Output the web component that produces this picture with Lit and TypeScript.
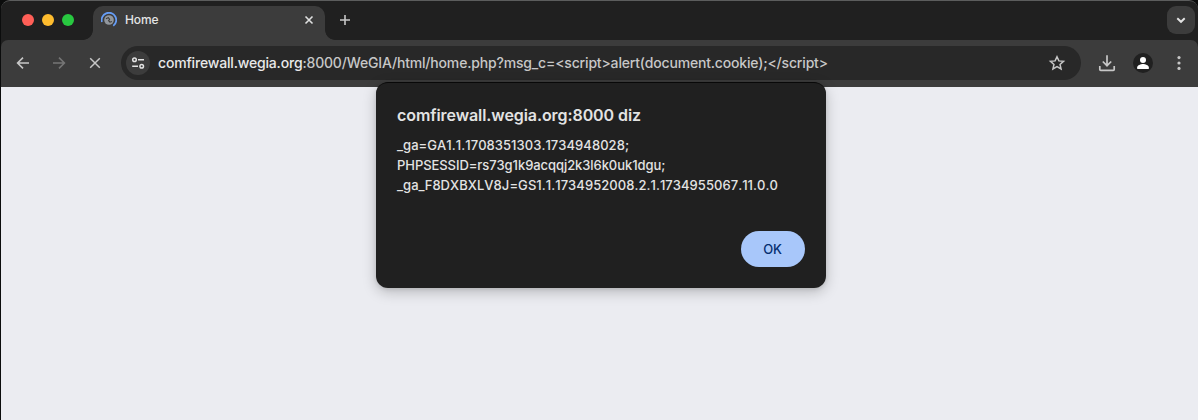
import { LitElement, html, css, svg } from "lit";
import { customElement } from "lit/decorators.js";

const icon = (size: number, body: unknown) => html`
  <svg width=${size} height=${size} viewBox="0 0 ${size} ${size}" fill="none">${body}</svg>`;

@customElement("tab-strip")
class TabStrip extends LitElement {
  static styles = css`
    :host { display: flex; height: 40px; box-sizing: border-box; padding: 5px 3px 0 21px; background: #202020; border-top: 1px solid #5c5d5d; border-top-left-radius: 9px; border-top-right-radius: 9px; }
    svg { display: block; flex: none; }
    .lights { display: flex; gap: 8px; padding-top: 8px; width: 71px; box-sizing: border-box; }
    .light { width: 12px; height: 12px; border-radius: 50%; }
    .red { background: #ff5f57; }
    .yellow { background: #febc2e; }
    .green { background: #28c840; }
    .tab { position: relative; display: flex; align-items: center; width: 232px; height: 34px; box-sizing: border-box; padding: 0 8px; background: #3c3c3c; border-radius: 10px 10px 0 0; }
    .tab::before, .tab::after { content: ""; position: absolute; bottom: 0; width: 10px; height: 10px; }
    .tab::before { left: -10px; background: radial-gradient(circle at 0 0, transparent 9.5px, #3c3c3c 10.2px); }
    .tab::after { right: -10px; background: radial-gradient(circle at 100% 0, transparent 9.5px, #3c3c3c 10.2px); }
    .title { flex: 1; margin-left: 8px; margin-top: -6px; font-size: 12px; line-height: 16px; font-weight: 500; color: #e4e5e5; letter-spacing: -.1px; }
    .shift { margin-top: -6px; }
    .plus { margin: 6px 0 0 12px; }
    .search { margin-left: auto; width: 28px; height: 28px; border-radius: 9px; background: #3c3c3c; display: grid; place-items: center; }
  `;
  render() {
    return html`
      <div class="lights"><i class="light red"></i><i class="light yellow"></i><i class="light green"></i></div>
      <div class="tab">
        <span class="shift">${icon(16, svg`
          <circle cx="8" cy="8" r="4.800" fill="#92979d"/>
          <path d="M5 6.800L7.300 5.600l1.300 1.600-1 1.500 1.300 1.500 2-.800" stroke="#3c3c3c" stroke-width="1.100"/>
          <path d="M.9 10A7.300 7.300 0 1 1 12.300 13.900" stroke="#669df6" stroke-width="1.800"/>`)}</span>
        <span class="title">Home</span>
        <span class="shift">${icon(16, svg`<path d="M4.500 4.500l7 7M11.500 4.500l-7 7" stroke="#dfe0e0" stroke-width="1.600"/>`)}</span>
      </div>
      <span class="plus">${icon(16, svg`<path d="M8 3v10M3 8h10" stroke="#c7c7c7" stroke-width="1.600"/>`)}</span>
      <div class="search">${icon(16, svg`<path d="M4.300 6.200L8 9.800l3.700-3.600" stroke="#e3e3e3" stroke-width="1.900"/>`)}</div>`;
  }
}

@customElement("nav-bar")
class NavBar extends LitElement {
  static styles = css`
    :host { display: flex; align-items: center; height: 47px; box-sizing: border-box; padding: 0 9px 1px 12px; background: #3c3c3c; border-radius: 7px 7px 0 0; }
    svg { display: block; flex: none; }
    .nav { display: flex; flex: none; gap: 16px; width: 108px; }
    .omni { display: flex; flex: none; align-items: center; width: 960px; height: 34px; box-sizing: border-box; padding: 0 14px 0 5px; border-radius: 17px; background: #282828; }
    .site { width: 24px; height: 24px; border-radius: 50%; background: #3c3c3c; display: grid; place-items: center; }
    .url { flex: 1; margin-left: 8px; font-size: 14px; line-height: 20px; letter-spacing: -.175px; white-space: nowrap; color: #c7c7c7; font-weight: 500; }
    .host { color: #e8e8e8; }
    .actions { display: flex; align-items: center; gap: 16px; margin-left: 16px; }
  `;
  render() {
    return html`
      <div class="nav">
        ${icon(20, svg`<path d="M16 10H5M10 4.600L4.600 10l5.400 5.400" stroke="#c7c7c7" stroke-width="1.600"/>`)}
        ${icon(20, svg`<path d="M4 10h11M10 4.600L15.400 10l-5.400 5.400" stroke="#757575" stroke-width="1.600"/>`)}
        ${icon(20, svg`<path d="M5.200 5.200l9.600 9.600M14.800 5.200l-9.600 9.600" stroke="#c7c7c7" stroke-width="1.500"/>`)}
      </div>
      <div class="omni">
        <span class="site">${icon(16, svg`
          <g stroke="#e3e3e3" stroke-width="1.500"><circle cx="4.500" cy="4.700" r="1.800"/><path d="M8 4.700h6M2.200 11.300h5.800"/><circle cx="11.700" cy="11.300" r="1.800"/></g>`)}</span>
        <span class="url"><span class="host">comfirewall.wegia.org</span>:8000/WeGIA/html/home.php?msg_c=&lt;script&gt;alert(document.cookie);&lt;/script&gt;</span>
        ${icon(20, svg`<path d="M10 3.700l1.900 4.200 4.600.450-3.450 3.050 1 4.500L10 13.550 5.950 15.900l1-4.500L3.500 8.350l4.600-.450z" stroke="#c7c7c7" stroke-width="1.500"/>`)}
      </div>
      <div class="actions">
        ${icon(20, svg`<path d="M10 2.300v10.200M5.800 8.500L10 12.700l4.200-4.200M2.800 13v3.400q0 .900.900.900h12.600q.900 0 .900-.900V13" stroke="#c7c7c7" stroke-width="1.700"/>`)}
        ${icon(20, svg`<circle cx="10" cy="10" r="10" fill="#202020"/><circle cx="10" cy="7" r="3" fill="#fff"/><path d="M4.200 16v-1.800c0-1.900 3.700-3.200 5.800-3.200s5.800 1.300 5.800 3.200V16z" fill="#fff"/>`)}
        ${icon(20, svg`<g fill="#c7c7c7"><circle cx="10" cy="4.600" r="1.600"/><circle cx="10" cy="10" r="1.600"/><circle cx="10" cy="15.400" r="1.600"/></g>`)}
      </div>`;
  }
}

@customElement("alert-dialog")
class AlertDialog extends LitElement {
  static styles = css`
    :host { display: flex; flex-direction: column; box-sizing: border-box; width: 450px; height: 206px; padding: 22px 21px 21px; background: #202020; border-radius: 12px; border-top: 1px solid #080808; box-shadow: 0 4px 14px rgba(0,0,0,.22), 0 1px 4px rgba(0,0,0,.1); }
    .heading { font-size: 16px; line-height: 20px; font-weight: 600; color: #e3e3e3; letter-spacing: -.08px; }
    .message { margin-top: 10px; font-size: 13px; line-height: 20px; font-weight: 500; color: #e3e3e3; white-space: nowrap; }
    .line { width: max-content; font-kerning: none; letter-spacing: .05px; }
    .session { letter-spacing: -.07px; }
    .ok { margin: auto 0 0 auto; width: 64px; height: 36px; border: 0; border-radius: 18px; background: #a8c7fa; color: #062e6f; font: 500 13px Inter, sans-serif; padding: 0 1px 0 0; letter-spacing: -.2px; }
  `;
  render() {
    return html`
      <div class="heading">comfirewall.wegia.org:8000 diz</div>
      <div class="message">
        <div class="line">_ga=GA1.1.1708351303.1734948028;</div>
        <div class="line session">PHPSESSID=rs73g1k9acqqj2k3l6k0uk1dgu;</div>
        <div class="line">_ga_F8DXBXLV8J=GS1.1.1734952008.2.1.1734955067.11.0.0</div>
      </div>
      <button class="ok">OK</button>`;
  }
}

@customElement("app-root")
class AppRoot extends LitElement {
  static styles = css`
    :host { display: block; position: relative; width: 1198px; height: 420px; box-sizing: border-box; padding-left: 1px; background: #0b0c0c; overflow: hidden; font-family: Inter, sans-serif; -webkit-font-smoothing: antialiased; }
    .window { display: flex; flex-direction: column; height: 100%; }
    .bar { background: #202020; }
    .page { flex: 1; background: #ebecf1; }
    .dialog { position: absolute; left: 376px; top: 82px; }
  `;
  render() {
    return html`
      <div class="window">
        <tab-strip></tab-strip>
        <div class="bar"><nav-bar></nav-bar></div>
        <div class="page"></div>
      </div>
      <alert-dialog class="dialog"></alert-dialog>`;
  }
}
